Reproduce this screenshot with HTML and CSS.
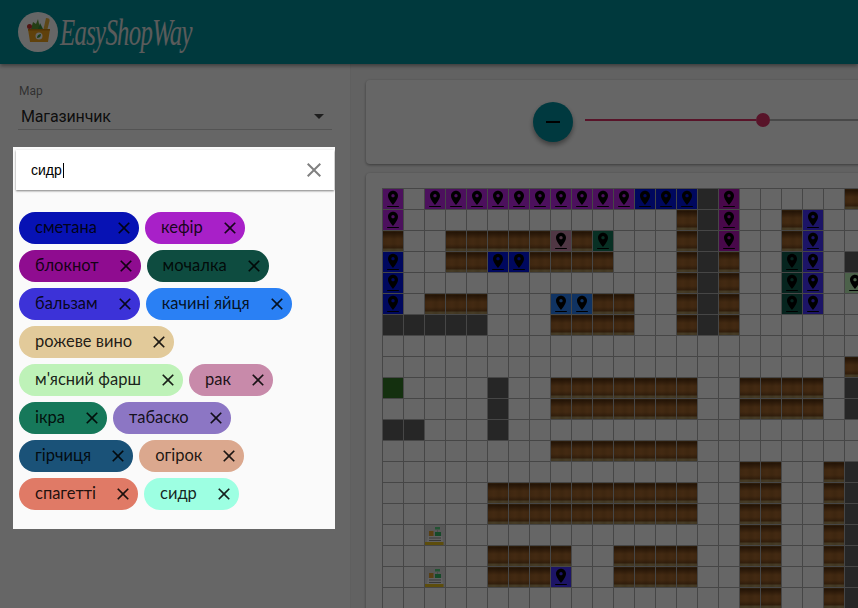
FILE: index.html
```html
<!DOCTYPE html>
<html lang="uk">
<head>
  <meta charset="UTF-8">
  <meta name="viewport" content="width=device-width, initial-scale=1.0">
  <title>EasyShopWay</title>
  <link rel="stylesheet" href="styles.css">
</head>
<body>
  <header class="topbar">
    <svg class="logo-icon" viewBox="0 0 40 40" aria-hidden="true">
      <circle cx="20" cy="20" r="20" fill="#fff"/>
      <path d="M28 6c3 0 4 1 3.500 3l-2 8h-4z" fill="#e8b23a"/>
      <path d="M15 10l3 2 2-5 2 10h-9z" fill="#5d9c35"/>
      <path d="M22 11l3 6h-5z" fill="#3f8f3a"/>
      <circle cx="11.500" cy="14.500" r="2.500" fill="#c8332e"/>
      <path d="M10 17h22l-2 13H12z" fill="#f0a31c"/>
      <path d="M10 17h22v1.500H10z" fill="#c67f0e"/>
      <circle cx="21" cy="24" r="3.500" fill="#fff"/>
      <path d="M19 26c0-3 2-4 4-4 0 3-2 4-4 4z" fill="#4c9a3a"/>
    </svg>
    <span class="logo-text">EasyShopWay</span>
  </header>

  <div class="layout">
    <aside class="sidebar">
      <div class="select">
        <label class="select-label">Мар</label>
        <div class="select-value">
          <span>Магазинчик</span>
          <span class="select-arrow"></span>
        </div>
      </div>
    </aside>

    <main class="content">
      <section class="card zoom-card">
        <button class="zoom-btn" aria-label="minus"><span></span></button>
        <div class="slider">
          <span class="slider-fill"></span>
          <span class="slider-thumb"></span>
          <span class="slider-rest"></span>
        </div>
      </section>
      <section class="card map-card">
        <div id="map" class="map"></div>
      </section>
    </main>
  </div>

  <div class="backdrop"></div>

  <div class="dialog">
    <div class="search">
      <div class="search-text">сидр</div>
      <svg class="search-close" viewBox="0 0 24 24"><path d="M19 6.410 17.590 5 12 10.590 6.410 5 5 6.410 10.590 12 5 17.590 6.410 19 12 13.410 17.590 19 19 17.590 13.410 12z"/></svg>
    </div>
    <div id="chips" class="chips"></div>
  </div>

  <script src="app.js"></script>
</body>
</html>
```

FILE: styles.css
```css
* {
  box-sizing: border-box;
}

html, body {
  height: 100%;
}

body {
  margin: 0;
  font-family: Roboto, "Noto Sans", sans-serif;
  background: #fff;
  color: rgba(0, 0, 0, 0.87);
  overflow: hidden;
}

.topbar {
  display: flex;
  align-items: center;
  gap: 2px;
  height: 64px;
  padding-left: 18px;
  background: #00909a;
  box-shadow: 0 2px 4px rgba(0, 0, 0, 0.4);
  position: relative;
  z-index: 1;
}

.logo-icon {
  width: 40px;
  height: 40px;
}

.logo-text {
  font-family: "Liberation Serif", serif;
  font-style: italic;
  font-size: 38px;
  letter-spacing: -1px;
  color: #e4e4e4;
  transform: scaleX(0.65);
  transform-origin: left center;
}

.layout {
  display: flex;
  height: 544px;
}

.sidebar {
  flex: 0 0 351px;
  padding: 20px 18px 0;
  background: #fff;
  border-right: 1px solid #eee;
}

.select-label {
  display: block;
  font-size: 12px;
  line-height: 14px;
  color: rgba(0, 0, 0, 0.54);
  padding-left: 1px;
}

.select-value {
  display: flex;
  justify-content: space-between;
  align-items: center;
  height: 32px;
  width: 314px;
  padding: 6px 8px 0 3px;
  font-size: 16px;
  letter-spacing: -0.15px;
  border-bottom: 1px solid #d0d0d0;
}

.select-arrow {
  width: 0;
  height: 0;
  border-left: 5px solid transparent;
  border-right: 5px solid transparent;
  border-top: 5px solid rgba(0, 0, 0, 0.7);
}

.content {
  flex: 1;
  min-width: 0;
  padding: 16px 0 0 15px;
  background: #f5f5f5;
}

.card {
  width: 700px;
  background: #fff;
  border-radius: 4px;
  box-shadow: 0 1px 3px rgba(0, 0, 0, 0.4);
}

.zoom-card {
  display: flex;
  align-items: center;
  gap: 12px;
  height: 84px;
  padding-left: 167px;
}

.zoom-btn {
  display: flex;
  align-items: center;
  justify-content: center;
  flex: none;
  width: 40px;
  height: 40px;
  padding: 0;
  border: none;
  border-radius: 50%;
  background: #00909f;
  box-shadow: 0 3px 5px rgba(0, 0, 0, 0.4);
}

.zoom-btn span {
  width: 14px;
  height: 2px;
  background: #000;
}

.slider {
  display: flex;
  align-items: center;
  flex: 1;
  height: 14px;
  margin-top: -4px;
}

.slider-fill {
  width: 171px;
  height: 2px;
  background: #dc3268;
}

.slider-thumb {
  flex: none;
  width: 14px;
  height: 14px;
  border-radius: 50%;
  background: #dc3268;
}

.slider-rest {
  flex: 1;
  height: 2px;
  background: #b5b5b5;
}

.map-card {
  margin-top: 9px;
  padding: 15px 16px 0;
  height: 460px;
}

.map {
  display: grid;
  grid-template-columns: repeat(23, 20px);
  grid-auto-rows: 20px;
  gap: 1px;
  padding: 1px;
  width: max-content;
  background: #b0b0b0;
}

.cell {
  display: flex;
  align-items: center;
  justify-content: center;
  background: #fff;
}

.cell svg {
  display: block;
  width: 20px;
  height: 20px;
}

.cell.wall {
  background: #5f5f5f;
}

.cell.entry {
  background: #327826;
}

.cell.wood {
  background:
    linear-gradient(90deg, rgba(60, 30, 0, 0.1), transparent 30%, rgba(60, 30, 0, 0.12) 55%, transparent 75%, rgba(60, 30, 0, 0.1)),
    linear-gradient(#8a6028 0, #5a3412 1px, #6e4118 3px, #a8692e 8px, #a8692e 13px, #7c4c20 17px, #b09660 18px, #b09660 20px);
}

.cell.till {
  background: #dcdcdc;
}

.backdrop {
  position: fixed;
  inset: 0;
  z-index: 2;
  background: rgba(0, 0, 0, 0.6);
}

.dialog {
  position: fixed;
  left: 13px;
  top: 147px;
  z-index: 3;
  width: 322px;
  height: 382px;
  padding: 3px 0 0 3px;
  background: #fafafa;
}

.search {
  display: flex;
  align-items: center;
  justify-content: space-between;
  width: 318px;
  height: 40px;
  padding: 0 8px 0 15px;
  background: #fff;
  box-shadow: 0 1px 2px rgba(0, 0, 0, 0.5);
}

.search-text {
  padding-right: 1px;
  font-family: "Liberation Sans", Arial, sans-serif;
  font-size: 14px;
  line-height: 15px;
  color: #000;
  border-right: 1px solid #000;
}

.search-close {
  width: 24px;
  height: 24px;
  fill: #808080;
}

.chips {
  display: flex;
  flex-wrap: wrap;
  gap: 6px;
  width: 316px;
  padding: 22px 0 0 3px;
}

.chip {
  display: flex;
  align-items: center;
  height: 32px;
  padding: 0 5px 0 16px;
  border-radius: 16px;
  font-family: Lato, "Noto Sans", sans-serif;
  font-size: 16.5px;
  color: rgba(0, 0, 0, 0.87);
}

.chip span {
  margin-top: -3px;
}

.chip svg {
  width: 20px;
  height: 20px;
  margin-left: 17px;
  fill: rgba(0, 0, 0, 0.87);
}
```

FILE: app.js
```js
const CLOSE_PATH = 'M19 6.410 17.590 5 12 10.590 6.410 5 5 6.410 10.590 12 5 17.590 6.410 19 12 13.410 17.590 19 19 17.590 13.410 12z';
const PIN_PATH = 'M18 8c0-3.310-2.690-6-6-6S6 4.690 6 8c0 4.500 6 11 6 11s6-6.500 6-11zm-8 0c0-1.100.9-2 2-2s2 .9 2 2-.89 2-2 2c-1.100 0-2-.9-2-2zM5 20.500v1.200h14v-1.200H5z';

const chips = [
  ['сметана', '#0712b4'],
  ['кефір', '#a820c8'],
  ['блокнот', '#8f0c90'],
  ['мочалка', '#0e4c40'],
  ['бальзам', '#3c32d8'],
  ['качині яйця', '#2a80f4'],
  ['рожеве вино', '#e2ca9a'],
  ["м'ясний фарш", '#bef2b8'],
  ['рак', '#c88aaa'],
  ['ікра', '#16785a'],
  ['табаско', '#8c76c4'],
  ['гірчиця', '#1a5278'],
  ['огірок', '#dba88e'],
  ['спагетті', '#e07a66'],
  ['сидр', '#9dffe2']
];

const chipsEl = document.getElementById('chips');
chips.forEach(([name, color]) => {
  const chip = document.createElement('div');
  chip.className = 'chip';
  chip.style.background = color;
  chip.innerHTML = `<span>${name}</span><svg viewBox="0 0 24 24"><path d="${CLOSE_PATH}"/></svg>`;
  chipsEl.appendChild(chip);
});

// . empty, w wood, # wall, g entry, t till, letters below are product pins
const pinColors = {
  p: '#bd28e8',
  n: '#0014ec',
  m: '#b414b8',
  i: '#4632ff',
  s: '#0f5a4b',
  b: '#2a80f4',
  k: '#c88aaa',
  e: '#16785a',
  f: '#bef2b8'
};

const rows = [
  'p.ppppppppppnnn#m.....w',
  'p.............w#m..wi..',
  'w..wwwwwkwe...w#m..wi..',
  'n..wwnnwwww...w#w..si.#',
  'n.............w#w..si.f',
  'n.www...bbww..w#w..si..',
  '#####...wwww..w#w......',
  '.......................',
  '......................w',
  'g....#..wwwwwww..wwww.#',
  '.....#..wwwwwww..wwww.#',
  '##...#.................',
  '........wwwwwww........',
  '.................ww..w#',
  '.....wwwwwwwwww..ww..w#',
  '.....wwwwwwwwww..ww..w#',
  '..t..............ww..w#',
  '.....wwww..wwww..ww..w#',
  '..t..wwwi..wwww..ww..w#',
  '.................ww..w#'
];

const tillSvg = `<svg viewBox="0 0 20 20">
  <rect x="10" y="2" width="5" height="2.500" fill="#58d080"/>
  <rect x="12" y="4.500" width="1" height="2.500" fill="#bbb"/>
  <rect x="4" y="6" width="4.500" height="5" fill="#e0a030"/>
  <rect x="10" y="7" width="6" height="4" fill="#38b868"/>
  <path d="M3 11h14l1 6H2z" fill="#f2f2f2"/>
  <path d="M4 12.500h12v1H4zM4 15h12v1H4z" fill="#8a8a8a"/>
  <rect x="0" y="17" width="18.500" height="3" fill="#e8c020"/>
</svg>`;

const map = document.getElementById('map');
rows.forEach((row) => {
  for (const ch of row) {
    const cell = document.createElement('div');
    cell.className = 'cell';
    if (ch === 'w') cell.classList.add('wood');
    else if (ch === '#') cell.classList.add('wall');
    else if (ch === 'g') cell.classList.add('entry');
    else if (ch === 't') {
      cell.classList.add('till');
      cell.innerHTML = tillSvg;
    } else if (pinColors[ch]) {
      cell.style.background = pinColors[ch];
      cell.innerHTML = `<svg viewBox="0 0 24 24"><path d="${PIN_PATH}"/></svg>`;
    }
    map.appendChild(cell);
  }
});
```
